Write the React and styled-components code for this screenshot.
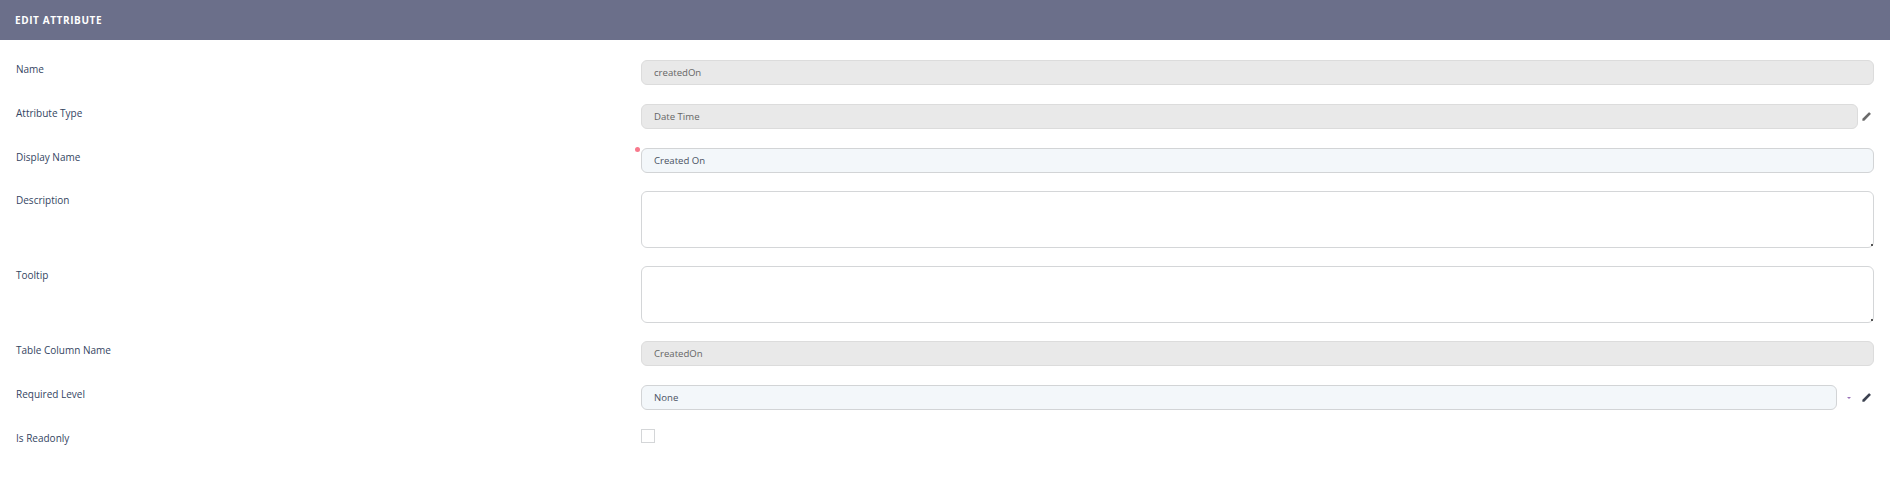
import React from 'react';
import styled, { createGlobalStyle } from 'styled-components';

const GlobalStyle = createGlobalStyle`
  html, body {
    margin: 0;
    padding: 0;
    background-color: #FFF;
    font-family: 'Open Sans', sans-serif;
  }
`;

const Header = styled.div`
  display: flex;
  align-items: center;
  height: 40px;
  padding-left: 15px;
  padding-bottom: 1px;
  box-sizing: border-box;
  background-color: #6b6f8a;
  color: #FFF;
  font-size: 10px;
  font-weight: 700;
  letter-spacing: 0.6px;
`;

const Form = styled.div`
  display: flex;
  flex-direction: column;
  gap: 18px;
  padding: 20px 16px 0 16px;
`;

const Row = styled.div`
  display: grid;
  grid-template-columns: 625px 1fr;
  min-height: ${(p) => (p.$tight ? 25 : 26)}px;
`;

const Label = styled.label`
  font-size: 10px;
  line-height: 15px;
  padding-top: 2px;
  color: #34455f;
`;

const Control = styled.div`
  position: relative;
  display: flex;
  align-items: flex-start;
`;

const Field = styled.input`
  flex: 1;
  min-width: 0;
  height: 25px;
  box-sizing: border-box;
  padding: 0 12px 1px 12px;
  border: 1px solid ${(p) => (p.$locked ? '#dcdcdc' : '#d2d4d6')};
  border-radius: 6px;
  outline: none;
  font-family: 'Open Sans', sans-serif;
  font-size: 9.6px;
  color: ${(p) => (p.$locked ? '#666' : '#4a5263')};
  background-color: ${(p) => (p.$locked ? '#e9e9e9' : '#f3f7fa')};
`;

const TextArea = styled.textarea`
  display: block;
  flex: 1;
  min-width: 0;
  height: 57px;
  box-sizing: border-box;
  padding: 4px 12px;
  border: 1px solid #d4d6d8;
  border-radius: 6px;
  outline: none;
  resize: none;
  background-color: #FFF;
`;

const ResizeGrip = styled.span`
  position: absolute;
  right: 1px;
  bottom: 2px;
  width: 2px;
  height: 2px;
  background-color: #555;
`;

const RequiredDot = styled.span`
  position: absolute;
  left: -6px;
  top: -1px;
  width: 5px;
  height: 5px;
  border-radius: 50%;
  background-color: #f8798c;
`;

const Actions = styled.div`
  display: flex;
  align-items: center;
  justify-content: flex-end;
  width: ${(p) => p.$width}px;
  height: 25px;
  padding-right: 2px;
  box-sizing: border-box;
  flex: none;
`;

const Caret = styled.span`
  width: 0;
  height: 0;
  margin-right: 10px;
  border-left: 2.5px solid transparent;
  border-right: 2.5px solid transparent;
  border-top: 2.5px solid #9a72b8;
`;

const Checkbox = styled.span`
  display: block;
  width: 14px;
  height: 14px;
  box-sizing: border-box;
  border: 1px solid #d4d6d8;
  background-color: #FFF;
`;

const PencilIcon = ({ color }) => (
  <svg width="11" height="11" viewBox="0 0 24 24" fill={color}>
    <path d="M3 16.8V21h4.2L21 7.2a1.2 1.2 0 0 0 0-1.7l-2.5-2.5a1.2 1.2 0 0 0-1.7 0z" />
  </svg>
);

const App = () => {
  return (
    <>
      <GlobalStyle />
      <Header>EDIT ATTRIBUTE</Header>
      <Form>
        <Row>
          <Label>Name</Label>
          <Control>
            <Field $locked readOnly value="createdOn" />
          </Control>
        </Row>
        <Row>
          <Label>Attribute Type</Label>
          <Control>
            <Field $locked readOnly value="Date Time" />
            <Actions $width={16}>
              <PencilIcon color="#6b6b6b" />
            </Actions>
          </Control>
        </Row>
        <Row $tight>
          <Label>Display Name</Label>
          <Control>
            <RequiredDot />
            <Field readOnly value="Created On" />
          </Control>
        </Row>
        <Row>
          <Label>Description</Label>
          <Control>
            <TextArea />
            <ResizeGrip />
          </Control>
        </Row>
        <Row>
          <Label>Tooltip</Label>
          <Control>
            <TextArea />
            <ResizeGrip />
          </Control>
        </Row>
        <Row>
          <Label>Table Column Name</Label>
          <Control>
            <Field $locked readOnly value="CreatedOn" />
          </Control>
        </Row>
        <Row>
          <Label>Required Level</Label>
          <Control>
            <Field readOnly value="None" />
            <Actions $width={37}>
              <Caret />
              <PencilIcon color="#3c4250" />
            </Actions>
          </Control>
        </Row>
        <Row>
          <Label>Is Readonly</Label>
          <Control>
            <Checkbox />
          </Control>
        </Row>
      </Form>
    </>
  );
};

export default App;
